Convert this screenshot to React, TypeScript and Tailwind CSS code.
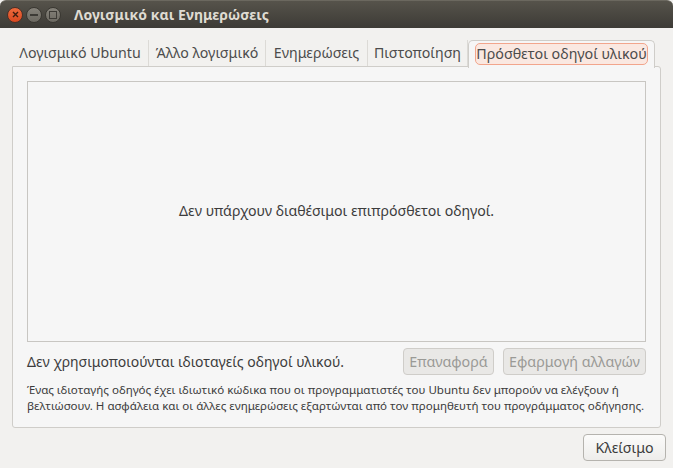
const font = "font-['Noto_Sans','Open_Sans',sans-serif]";

function Tab({ label, w }: { label: string; w: string }) {
  return (
    <div className={`${w} h-[26px] flex items-center justify-center border-r border-[#dcdad6] text-[14.2px] text-[#4c4c4c] whitespace-nowrap`}>
      {label}
    </div>
  );
}

export default function App() {
  return (
    <div className={`w-[673px] h-[468px] bg-[#f2f1ef] flex flex-col overflow-hidden ${font}`}>
      <div className="h-[28px] shrink-0 rounded-t-[6px] bg-gradient-to-b from-[#56534b] to-[#3d3b36] border-t border-[#6b685f] flex items-center pl-[7px]">
        <div className="flex items-center gap-[3px]">
          <div className="w-[16px] h-[16px] rounded-full bg-gradient-to-b from-[#ee6a3c] to-[#d9481f] border border-[#4a3028] flex items-center justify-center">
            <svg width="7" height="7" viewBox="0 0 7 7"><path d="M1 1L6 6M6 1L1 6" stroke="#3d1d10" strokeWidth="1.4" /></svg>
          </div>
          <div className="w-[16px] h-[16px] rounded-full bg-gradient-to-b from-[#85827a] to-[#6c6961] border border-[#3a3832] flex items-center justify-center">
            <div className="w-[8px] h-[2px] bg-[#3d3b36]" />
          </div>
          <div className="w-[16px] h-[16px] rounded-full bg-gradient-to-b from-[#85827a] to-[#6c6961] border border-[#3a3832] flex items-center justify-center">
            <div className="w-[8px] h-[8px] border border-[#3d3b36]" />
          </div>
        </div>
        <div className="ml-[13px] mb-[1px] text-[14px] font-bold text-[#dfdbd2] tracking-[0.05px] whitespace-nowrap">Λογισμικό και Ενημερώσεις</div>
      </div>
      <div className="flex-1 flex flex-col pl-[12px] pr-[12px] pt-[12px]">
        <div className="flex items-end h-[26px] relative">
          <Tab label="Λογισμικό Ubuntu" w="w-[137px]" />
          <Tab label="Άλλο λογισμικό" w="w-[117px]" />
          <Tab label="Ενημερώσεις" w="w-[102px]" />
          <Tab label="Πιστοποίηση" w="w-[100px]" />
          <div className="absolute left-[456px] top-[0px] w-[187px] h-[28px] bg-[#f6f6f6] border border-b-0 border-[#cfcdc9] rounded-t-[5px] z-10 flex items-start justify-center pt-[2px] px-[6px]">
            <div className="w-full h-[22px] rounded-[5px] border border-[#f2a58c] bg-[#fae8e1] flex items-center justify-center text-[14.3px] text-[#4c4c4c] whitespace-nowrap">Πρόσθετοι οδηγοί υλικού</div>
          </div>
        </div>
        <div className="h-[362px] border border-[#cfcdc9] rounded-b-[3px] rounded-tr-[3px] bg-[#f6f6f6] px-[14px] pt-[14px] flex flex-col w-[649px]">
          <div className="h-[261px] shrink-0 pb-[2px] bg-[#f6f6f6] border border-[#c8c6c2] flex items-center justify-center text-[14.15px] text-[#3c3c3c]">
            Δεν υπάρχουν διαθέσιμοι επιπρόσθετοι οδηγοί.
          </div>
          <div className="flex items-center mt-[6px] h-[27px]">
            <div className="text-[14px] text-[#3c3c3c] whitespace-nowrap">Δεν χρησιμοποιούνται ιδιοταγείς οδηγοί υλικού.</div>
            <div className="ml-auto flex gap-[9px]">
              <div className="w-[91px] h-[27px] rounded-[4px] border border-[#cfcdc9] bg-[#e9e8e6] flex items-center justify-center text-[14.3px] text-[#9a9a96]">Επαναφορά</div>
              <div className="w-[143px] h-[27px] rounded-[4px] border border-[#cfcdc9] bg-[#e9e8e6] flex items-center justify-center text-[14.3px] text-[#9a9a96]">Εφαρμογή αλλαγών</div>
            </div>
          </div>
          <div className="mt-[7px] text-[11.56px] leading-[16px] text-[#3c3c3c] whitespace-nowrap">
            <div>Ένας ιδιοταγής οδηγός έχει ιδιωτικό κώδικα που οι προγραμματιστές του Ubuntu δεν μπορούν να ελέγξουν ή</div>
            <div>βελτιώσουν. Η ασφάλεια και οι άλλες ενημερώσεις εξαρτώνται από τον προμηθευτή του προγράμματος οδήγησης.</div>
          </div>
        </div>
        <div className="flex justify-end mt-[6px]">
          <div className="w-[83px] h-[27px] mr-[-5px] rounded-[4px] border border-[#b5b3ae] bg-gradient-to-b from-[#fbfbfa] to-[#eeedeb] flex items-center justify-center text-[14.2px] text-[#3c3c3c]">Κλείσιμο</div>
        </div>
      </div>
    </div>
  );
}
